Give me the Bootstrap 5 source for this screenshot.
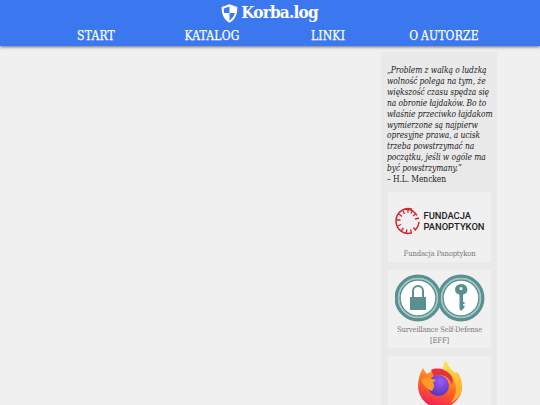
<!DOCTYPE html>
<html lang="pl">

<head>
    <meta charset="UTF-8">
    <meta name="viewport" content="width=device-width, initial-scale=1.0">
    <title>Korba.log</title>
    <link href="https://cdn.jsdelivr.net/npm/bootstrap@5.3.1/dist/css/bootstrap.min.css" rel="stylesheet">
    <style>
        html, body { height: 405px; overflow: hidden; }
        body { background: #f1f0f0; font-family: "DejaVu Serif Condensed", "DejaVu Serif", "Liberation Serif", serif; }
        .topbar { background: #3b78f0; height: 46px; box-shadow: 0 1px 3px rgba(0, 0, 0, .55); position: relative; z-index: 2; }
        .brand-line { height: 26px; color: #fff; font-size: 17px; font-weight: 700; letter-spacing: -.8px; gap: 3px; padding-right: 1px; }
        .menu-row { width: 464px; margin: 0 auto; padding-top: 1px; }
        .menu-row .nav-link { color: #fff; padding: 0; font-size: 12px; letter-spacing: .2px; word-spacing: -1px; line-height: 18px; -webkit-text-stroke: .25px #fff; }
        .side-col { width: 116px; margin-right: 43px; margin-top: 6px; background: #e9e9e9; padding: 13px 5px 0 6px; }
        .quote-text { font-size: 8.4px; line-height: 10.9px; color: #222; margin-bottom: 6px; letter-spacing: -.08px; white-space: nowrap; }
        .quote-text em { display: block; }
        .tile { background: #f1f0f0; border: 1px solid #ebebeb; border-radius: 0; margin-bottom: 6px; text-align: center; color: #777; font-size: 7.6px; line-height: 11.5px; letter-spacing: -.15px; }
        .tile svg { display: block; margin: 0 auto; }
        .logo-word { font-family: Roboto, "Liberation Sans", sans-serif; font-weight: 500; font-size: 9.4px; line-height: 11px; letter-spacing: 0; color: #222; text-align: left; }
        .pan-logo { height: 56px; padding-top: 3px; gap: 3px; }
        .pan-logo svg { margin: 0; }
        .tile-one { height: 72px; }
        .tile-two { height: 80px; }
        .tile-two svg { margin-top: 4px; }
        .tile-two .tile-label { margin-top: 2px; }
        .tile-three { height: 80px; overflow: hidden; }
        .tile-three svg { margin-top: 4px; }
    </style>
</head>

<body>

    <header class="topbar">
        <div class="brand-line d-flex justify-content-center align-items-center">
            <svg width="17" height="19" viewBox="0 0 17 19">
                <path d="M8.500 .3 16.300 3c.3 7-2.200 12.500-7.800 15.700C2.900 15.500.4 10 .7 3Z" fill="#fff"/>
                <path d="M8.500 2.500 2.800 4.500c0 1.600.1 3 .4 4.500h5.300ZM8.500 9v7.400c2.900-1.900 4.700-4.400 5.300-7.400Z" fill="#3b78f0"/>
            </svg>
            <span>Korba.log</span>
        </div>
        <ul class="nav nav-justified menu-row">
            <li class="nav-item"><a class="nav-link" href="#">START</a></li>
            <li class="nav-item"><a class="nav-link" href="#">KATALOG</a></li>
            <li class="nav-item"><a class="nav-link" href="#">LINKI</a></li>
            <li class="nav-item"><a class="nav-link" href="#">O AUTORZE</a></li>
        </ul>
    </header>

    <div class="d-flex justify-content-end">
        <aside class="side-col">
            <p class="quote-text">
                <em>„Problem z walką o ludzką</em>
                <em>wolność polega na tym, że</em>
                <em>większość czasu spędza się</em>
                <em>na obronie łajdaków. Bo to</em>
                <em>właśnie przeciwko łajdakom</em>
                <em>wymierzone są najpierw</em>
                <em>opresyjne prawa, a ucisk</em>
                <em>trzeba powstrzymać na</em>
                <em>początku, jeśli w ogóle ma</em>
                <em>być powstrzymany.”</em>
                – H.L. Mencken
            </p>

            <div class="card tile tile-one">
                <div class="pan-logo d-flex align-items-center justify-content-center">
                    <svg width="26" height="30" viewBox="0 0 26 30" fill="none" stroke="#d2232f">
                        <path d="M17 3.200A12 12.500 0 1 0 17 26.800" stroke-width="1.500"/>
                        <path d="M9 3.500a12 12 0 0 1 13 6" stroke-width="1.500"/>
                        <path d="M20 24a12 12 0 0 0 4-8" stroke-width="1.500"/>
                        <path d="M13 2.800v4M17.500 4l-1.500 3.500M21 7.500l-3 2.500M24 12l-4 1M8 4.500l1.500 3.500M4 8l3 2.500M1.500 14h4M2.500 20l3.500-1.500M6 25l2.500-3M11 27l1-3.500M16.500 27l-1-3.500M21 24.500l-2.500-3" stroke-width="1.300"/>
                    </svg>
                    <div class="logo-word">FUNDACJA<br>PANOPTYKON</div>
                </div>
                <div class="tile-label">Fundacja Panoptykon</div>
            </div>

            <div class="card tile tile-two">
                <svg width="90" height="48" viewBox="0 0 90 48">
                    <g fill="#fff" stroke="#5b9090" stroke-width="3.500">
                        <circle cx="23" cy="24" r="21.700"/>
                        <circle cx="66" cy="24" r="21.700"/>
                    </g>
                    <g fill="none" stroke="#9cc8c6" stroke-width="1.500">
                        <circle cx="23" cy="24" r="19.500"/>
                        <circle cx="66" cy="24" r="19.500"/>
                    </g>
                    <g fill="none" stroke="#5b9090" stroke-width="1.500">
                        <circle cx="23" cy="24" r="18"/>
                        <circle cx="66" cy="24" r="18"/>
                    </g>
                    <path d="M15 23h16v13H15z" fill="#5b9090"/>
                    <path d="M18 23v-6a5 5 0 0 1 10 0v6" fill="none" stroke="#5b9090" stroke-width="2"/>
                    <path d="M66 10a6.500 5.500 0 0 1 2 10.700V28h1.500v2H68v1.500h1.500v2L66 37l-1.500-2V20.700A6.500 5.500 0 0 1 66 10Z" fill="#5b9090"/>
                    <circle cx="66" cy="14.500" r="1.500" fill="#fff"/>
                </svg>
                <div class="tile-label">Surveillance Self-Defense<br>[EFF]</div>
            </div>

            <div class="card tile tile-three">
                <svg width="46" height="48" viewBox="0 0 46 48">
                    <defs>
                        <linearGradient id="foxBody" x1=".75" y1="0" x2=".35" y2="1">
                            <stop offset="0" stop-color="#ffbd2e"/>
                            <stop offset=".5" stop-color="#ff6a1f"/>
                            <stop offset="1" stop-color="#f0195e"/>
                        </linearGradient>
                        <linearGradient id="foxFlame" x1=".3" y1="0" x2=".8" y2="1">
                            <stop offset="0" stop-color="#ffe14a"/>
                            <stop offset="1" stop-color="#ffa62b"/>
                        </linearGradient>
                        <radialGradient id="foxGlobe" cx=".6" cy=".3" r=".8">
                            <stop offset="0" stop-color="#9a5cf2"/>
                            <stop offset="1" stop-color="#4d2fb5"/>
                        </radialGradient>
                    </defs>
                    <path d="M6 8c1 2 2 4 4 6 4-3 9-5 14-5 8 0 21 6 21 18 0 11-10 21-22 21S1 38 1 26c0-7 2-13 5-18Z" fill="url(#foxBody)"/>
                    <path d="M29 0c-3 4-4 9-1 12 6 2 10 7 11 14 1 8-3 14-6 17 8-3 12-10 12-17 0-6-2-11-5-14-1 1-2 1-3 0-3-3-7-7-8-12Z" fill="url(#foxFlame)"/>
                    <circle cx="21.500" cy="25.500" r="10.500" fill="url(#foxGlobe)"/>
                    <path d="M14 10c6-3 14-1 19 4 3 3 3 7 2 11-2-6-6-10-13-10-2 0-4 .5-5 1.500Z" fill="#e8303f"/>
                    <path d="M4 20c3-3 8-3 11-1l4 1c-1 1-3 2-3 3 2 2 1 5-1 8-5-2-9-6-11-11Z" fill="#ff9a26"/>
                </svg>
            </div>
        </aside>
    </div>

</body>

</html>
